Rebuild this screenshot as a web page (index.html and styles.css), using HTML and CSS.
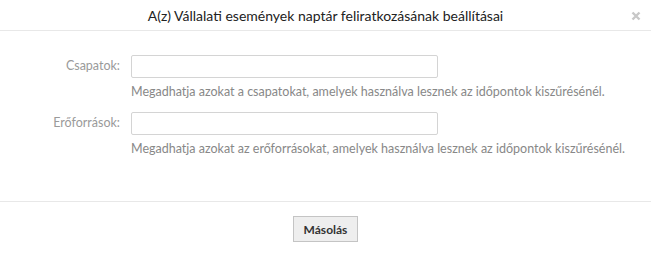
FILE: index.html
```html
<!DOCTYPE html>
<html>
<head>
<meta charset="utf-8">
<link rel="stylesheet" href="styles.css">
</head>
<body>
<div class="dialog">
  <div class="header">
    <h1 class="title">A(z) Vállalati események naptár feliratkozásának beállításai</h1>
    <span class="close">
      <svg width="10" height="10" viewBox="0 0 10 10"><path d="M1.5 1.5 L8.5 8.5 M8.5 1.5 L1.5 8.5" stroke="#c8c8c8" stroke-width="2.4" stroke-linecap="butt"/></svg>
    </span>
  </div>
  <div class="content">
    <div class="row">
      <label class="label">Csapatok:</label>
      <div class="field">
        <input class="input" type="text">
        <p class="hint">Megadhatja azokat a csapatokat, amelyek használva lesznek az időpontok kiszűrésénél.</p>
      </div>
    </div>
    <div class="row">
      <label class="label">Erőforrások:</label>
      <div class="field">
        <input class="input" type="text">
        <p class="hint">Megadhatja azokat az erőforrásokat, amelyek használva lesznek az időpontok kiszűrésénél.</p>
      </div>
    </div>
  </div>
  <div class="footer">
    <button class="btn">Másolás</button>
  </div>
</div>
</body>
</html>
```
FILE: styles.css
```css
* { box-sizing: border-box; }
html, body { margin: 0; padding: 0; background: #fff; }
body { font-family: Lato, "Open Sans", sans-serif; width: 651px; height: 256px; overflow: hidden; }
.dialog { width: 651px; }
.header {
  height: 31px;
  border-bottom: 1px solid #e8e8e8;
  display: flex;
  align-items: center;
  justify-content: center;
  position: relative;
}
.title { margin: 0; font-size: 14px; font-weight: normal; color: #222; }
.close { position: absolute; right: 10px; top: 11px; line-height: 0; }
.content { padding: 24px 0 45px; }
.row { display: flex; align-items: flex-start; }
.row + .row { margin-top: 13px; }
.label {
  width: 121px;
  padding-right: 1px;
  text-align: right;
  font-size: 12.5px;
  color: #9a9a9a;
  line-height: 22px;
}
.field { margin-left: 10px; }
.input {
  display: block;
  width: 307px;
  height: 23px;
  border: 1px solid #d4d4d4;
  border-radius: 2px;
  margin: 0;
  padding: 0 4px;
  background: #fff;
}
.hint { margin: 6px 0 0; font-size: 12.5px; color: #888; line-height: 15px; }
.footer {
  border-top: 1px solid #e8e8e8;
  padding-top: 14px;
  display: flex;
  justify-content: center;
}
.btn {
  height: 26px;
  padding: 0 10px;
  border: 1px solid #c4c4c4;
  background: #eee;
  font-family: inherit;
  font-size: 12px;
  font-weight: bold;
  color: #333;
  border-radius: 0;
}
```
